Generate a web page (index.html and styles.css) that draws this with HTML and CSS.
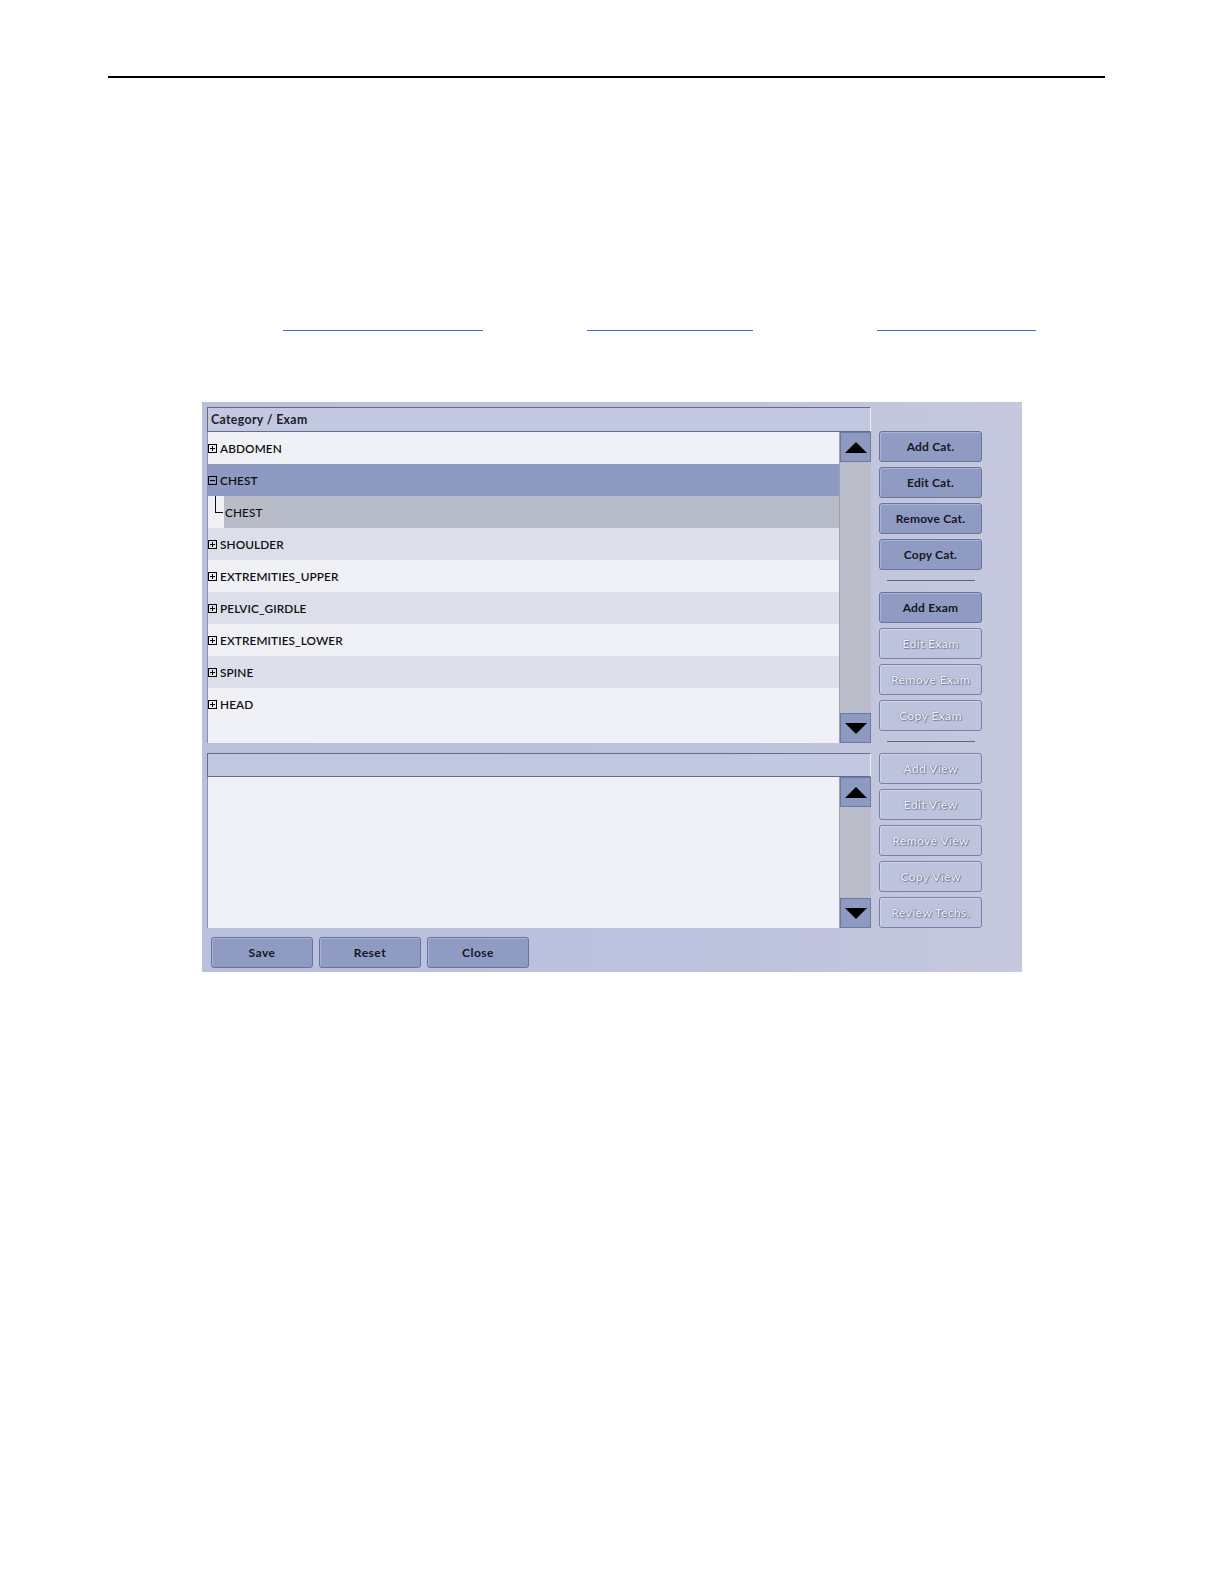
FILE: index.html
```html
<!DOCTYPE html>
<html>
<head>
<meta charset="utf-8">
<link rel="stylesheet" href="styles.css">
</head>
<body>
<div class="page">
  <div class="rule"></div>
  <div class="links">
    <span class="link l1"></span>
    <span class="link l2"></span>
    <span class="link l3"></span>
  </div>
  <div class="dialog">
    <div class="left">
      <div class="panel-head">Category / Exam</div>
      <div class="tree">
        <div class="rows">
          <div class="row light"><svg class="exp" viewBox="0 0 9 9"><rect x="0.5" y="0.5" width="8" height="8" fill="none" stroke="#000"/><path d="M2 4.5h5M4.5 2v5" stroke="#000"/></svg>ABDOMEN</div>
          <div class="row sel"><svg class="exp" viewBox="0 0 9 9"><rect x="0.5" y="0.5" width="8" height="8" fill="none" stroke="#000"/><path d="M2 4.5h5" stroke="#000"/></svg>CHEST</div>
          <div class="row child"><span class="branch"></span><span class="child-label">CHEST</span></div>
          <div class="row alt"><svg class="exp" viewBox="0 0 9 9"><rect x="0.5" y="0.5" width="8" height="8" fill="none" stroke="#000"/><path d="M2 4.5h5M4.5 2v5" stroke="#000"/></svg>SHOULDER</div>
          <div class="row light"><svg class="exp" viewBox="0 0 9 9"><rect x="0.5" y="0.5" width="8" height="8" fill="none" stroke="#000"/><path d="M2 4.5h5M4.5 2v5" stroke="#000"/></svg>EXTREMITIES_UPPER</div>
          <div class="row alt"><svg class="exp" viewBox="0 0 9 9"><rect x="0.5" y="0.5" width="8" height="8" fill="none" stroke="#000"/><path d="M2 4.5h5M4.5 2v5" stroke="#000"/></svg>PELVIC_GIRDLE</div>
          <div class="row light"><svg class="exp" viewBox="0 0 9 9"><rect x="0.5" y="0.5" width="8" height="8" fill="none" stroke="#000"/><path d="M2 4.5h5M4.5 2v5" stroke="#000"/></svg>EXTREMITIES_LOWER</div>
          <div class="row alt"><svg class="exp" viewBox="0 0 9 9"><rect x="0.5" y="0.5" width="8" height="8" fill="none" stroke="#000"/><path d="M2 4.5h5M4.5 2v5" stroke="#000"/></svg>SPINE</div>
          <div class="row light"><svg class="exp" viewBox="0 0 9 9"><rect x="0.5" y="0.5" width="8" height="8" fill="none" stroke="#000"/><path d="M2 4.5h5M4.5 2v5" stroke="#000"/></svg>HEAD</div>
        </div>
        <div class="scroll">
          <div class="sbtn"><svg viewBox="0 0 22 11" class="tri"><path d="M0 11L11 0L22 11Z" fill="#000"/></svg></div>
          <div class="track"></div>
          <div class="sbtn"><svg viewBox="0 0 22 11" class="tri"><path d="M0 0L22 0L11 11Z" fill="#000"/></svg></div>
        </div>
      </div>
      <div class="panel-head second"></div>
      <div class="tree lower">
        <div class="rows"></div>
        <div class="scroll">
          <div class="sbtn"><svg viewBox="0 0 22 11" class="tri"><path d="M0 11L11 0L22 11Z" fill="#000"/></svg></div>
          <div class="track"></div>
          <div class="sbtn"><svg viewBox="0 0 22 11" class="tri"><path d="M0 0L22 0L11 11Z" fill="#000"/></svg></div>
        </div>
      </div>
      <div class="footer">
        <button class="btn">Save</button>
        <button class="btn">Reset</button>
        <button class="btn">Close</button>
      </div>
    </div>
    <div class="side">
      <button class="btn">Add Cat.</button>
      <button class="btn">Edit Cat.</button>
      <button class="btn">Remove Cat.</button>
      <button class="btn">Copy Cat.</button>
      <div class="sep"></div>
      <button class="btn">Add Exam</button>
      <button class="btn off">Edit Exam</button>
      <button class="btn off">Remove Exam</button>
      <button class="btn off">Copy Exam</button>
      <div class="sep"></div>
      <button class="btn off">Add View</button>
      <button class="btn off">Edit View</button>
      <button class="btn off">Remove View</button>
      <button class="btn off">Copy View</button>
      <button class="btn off">Review Techs.</button>
    </div>
  </div>
</div>
</body>
</html>
```

FILE: styles.css
```css
* { box-sizing: border-box; }
html, body { margin: 0; padding: 0; background: #fff; }
body { font-family: Lato, "Open Sans", "Liberation Sans", sans-serif; }

.page { width: 1224px; height: 1584px; padding-top: 76px; }

.rule { margin-left: 108px; width: 997px; height: 2px; background: #000; }

.links { display: flex; margin-top: 252px; height: 1px; }
.link { display: block; height: 1px; background: #3e6fca; }
.l1 { margin-left: 283px; width: 200px; }
.l2 { margin-left: 104px; width: 166px; }
.l3 { margin-left: 124px; width: 159px; }

.dialog {
  margin-left: 202px;
  margin-top: 71px;
  width: 820px;
  height: 570px;
  display: flex;
  padding: 5px 0 0 5px;
  background: linear-gradient(90deg, #b9c0dc 0%, #bcc2dd 60%, #c6c9dd 100%);
}

.left { width: 664px; display: flex; flex-direction: column; }

.panel-head {
  height: 25px;
  border: 1px solid #676c86;
  border-right: 1px solid #eef0f8;
  background: #c3c8e1;
  font-size: 12.3px;
  font-weight: 700;
  color: #1c1c2a;
  padding-left: 3px;
  line-height: 23px;
  letter-spacing: 0.35px;
}
.panel-head.second { margin-top: 10px; height: 24px; }

.tree { display: flex; height: 311px; }
.tree.lower { height: 151px; }

.rows { flex: 1; background: #eff1f7; border-left: 1px solid #8d92ab; }

.row {
  height: 32px;
  display: flex;
  align-items: center;
  font-size: 11.8px;
  font-weight: 600;
  color: #111;
  letter-spacing: 0.1px;
}
.row.light { background: #eff1f7; }
.row.alt { background: #dcdfe9; }
.row.sel { background: #8f9ac3; }
.row.child { background: #eff1f7; }

.exp { width: 9px; height: 9px; margin: 0 3px 0 0; flex: none; }

.branch {
  width: 16px;
  height: 32px;
  flex: none;
  position: relative;
}
.branch::before {
  content: "";
  position: absolute;
  left: 7px; top: 0;
  width: 7px; height: 16px;
  border-left: 1px solid #111;
  border-bottom: 1px solid #111;
}
.child-label {
  flex: 1;
  align-self: stretch;
  background: #b8bcc9;
  display: flex;
  align-items: center;
  padding-left: 1px;
  font-weight: 500;
}

.scroll {
  width: 32px;
  display: flex;
  flex-direction: column;
  border-left: 1px solid #9aa0b8;
}
.sbtn {
  height: 30px;
  background: #8f9ac3;
  border: 1px solid #6f78a0;
  display: flex;
  align-items: center;
  justify-content: center;
}
.track { flex: 1; background: #babdc8; }
.tri { width: 22px; height: 11px; }

.btn {
  font-family: Lato, "Open Sans", "Liberation Sans", sans-serif;
  font-size: 12px;
  font-weight: 700;
  color: #161622;
  background: #909bc4;
  border: 1px solid #6a739c;
  border-radius: 3px;
  box-shadow: inset 1px 1px 0 #aab2d6;
  height: 31px;
  padding: 0;
  letter-spacing: 0.2px;
}
.btn.off {
  background: #bec3dd;
  border-color: #7880a8;
  box-shadow: inset 1px 1px 0 #d2d6ea;
  color: #eef0f7;
  text-shadow: 0 0 1px #454b70, 1px 1px 1px #7d83a6;
  font-weight: 600;
  font-size: 12.2px;
  letter-spacing: 0.3px;
}

.footer { display: flex; gap: 6px; margin-top: 9px; padding-left: 4px; }
.footer .btn { width: 102px; letter-spacing: 0.5px; }

.side {
  width: 103px;
  margin-left: 8px;
  margin-top: 24px;
  display: flex;
  flex-direction: column;
  gap: 5px;
}
.side .btn { width: 103px; }
.sep {
  height: 1px;
  background: #5a6391;
  margin: 5px 7px 6px 8px;
}
```
